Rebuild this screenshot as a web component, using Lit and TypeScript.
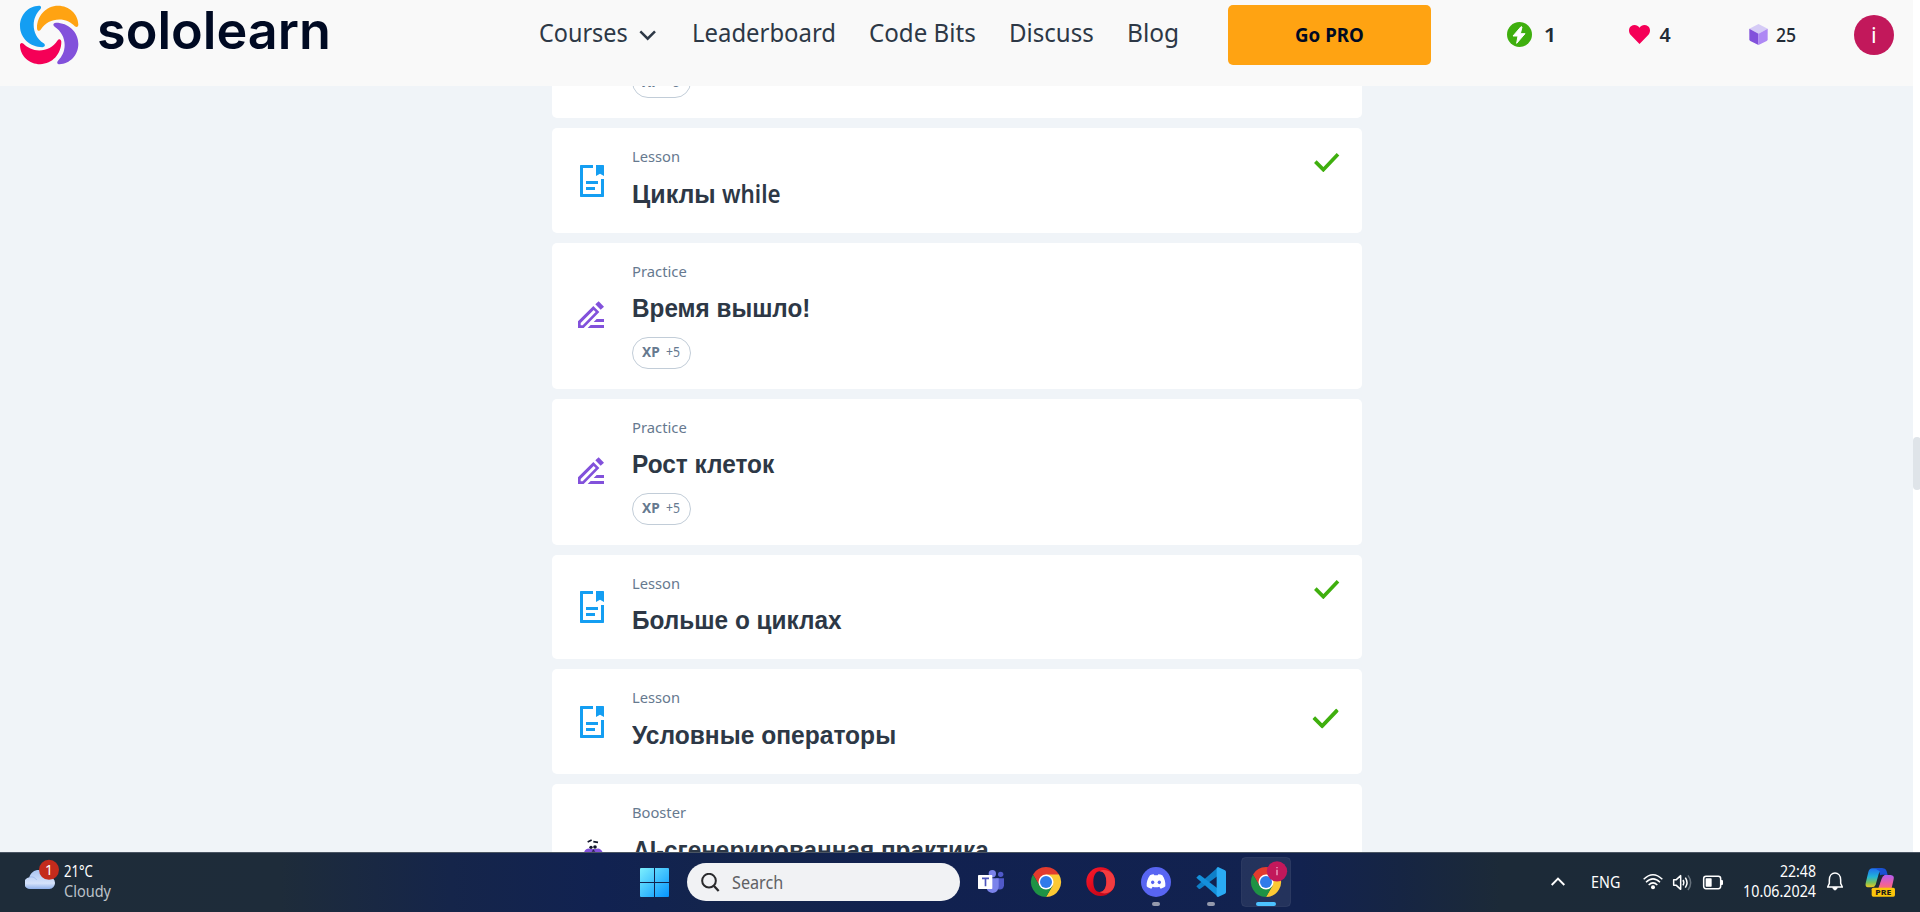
import { LitElement, html, svg, css, nothing } from "lit";
import { customElement, property, query } from "lit/decorators.js";

/* Single line of text whose inked width is set exactly in pixels. */
@customElement("fit-text")
class FitText extends LitElement {
  @property({ type: Number }) w = 10;
  @property() text = "";
  @query("span") span!: HTMLSpanElement;

  static styles = css`
    :host { display: block; flex: none; white-space: nowrap; }
    span { display: inline-block; transform-origin: 0 50%; white-space: pre; }
  `;

  updated() {
    const cs = getComputedStyle(this);
    const ctx = document.createElement("canvas").getContext("2d")!;
    ctx.font = `${cs.fontWeight} ${cs.fontSize} ${cs.fontFamily}`;
    const m = ctx.measureText(this.text);
    const ink = m.actualBoundingBoxRight + m.actualBoundingBoxLeft;
    const k = this.w / ink;
    this.style.width = `${this.w}px`;
    this.span.style.transform = `translateX(${m.actualBoundingBoxLeft * k}px) scaleX(${k})`;
  }

  render() {
    return html`<span>${this.text}</span>`;
  }
}

const t = (text: string, w: number, cls = "") =>
  html`<fit-text class=${cls} .text=${text} .w=${w}></fit-text>`;

/* Icons are drawn on a grid three times finer than the pixel grid. */
const icon = (x: number, y: number, w: number, h: number, body: unknown, cls = "") =>
  html`<svg class=${cls} width=${w / 3} height=${h / 3} viewBox="${x} ${y} ${w} ${h}">${body}</svg>`;

const petal =
  "M117 17.5C85 18 60 45 60 78C60 115 91 141.500 127 141.500C136 141 137 134 131 130C112 118 101 97 101 75C101 56 109 40 121 28C126 22 122 17.500 117 17.500Z";

const logo = icon(57, 15, 180, 180, svg`
  <path d=${petal} fill="#149ef2"/>
  <path d=${petal} fill="#ffa312" transform="rotate(90 147.500 105)"/>
  <path d=${petal} fill="#8251db" transform="rotate(180 147.500 105)"/>
  <path d=${petal} fill="#f50057" transform="rotate(270 147.500 105)"/>`, "swirl");

const docIcon = icon(114, 135, 84, 96, svg`
  <g fill="#149ef2"><path d="M159 135H122Q120 135 120 137V229Q120 231 122 231H190Q192 231 192 229V177H183V222H129V144H159Z"/>
  <path d="M168 135H190Q192 135 192 137V168L180 161L168 168Z"/>
  <path d="M138 183H174V192H138ZM138 201H165V210H138Z"/></g>`);

const penIcon = icon(114, 543, 84, 81, svg`
  <g fill="#8251db"><path d="M176 544L192 560L182 569L166 553Z"/>
  <path fill-rule="evenodd" d="M114 624V604L160 558L178 576L131 624ZM122 616H128L167 576L161 570L122 609Z"/>
  <path d="M170 597H192V606H161ZM152 615H192V624H143Z"/></g>`);

const robotIcon = icon(122, 898, 74, 72, svg`
  <path d="M142 907L154 901M159 906L173 908" stroke="#12162c" stroke-width="5" fill="none"/>
  <path d="M131 938C136 925 146 925 151 928H167C174 924 183 927 187 938L190 966H127Z" fill="#8251db"/>
  <circle cx="152" cy="923" r="5" fill="#12162c"/><circle cx="164" cy="922" r="5.500" fill="#12162c"/>
  <path d="M154 936L159 929L165 936Z" fill="#2b2250"/>`);

const tick = (cls: string) => icon(282, 98, 76, 58, svg`
  <path d="M286 124L310 148L354 102" fill="none" stroke="#3faf0e" stroke-width="11"/>`, cls);

const chrome = (cx: number) => svg`
  <g transform="translate(${cx} 126)">
    <path d="M0 0L-39 -22.500A45 45 0 0 1 39 -22.500Z" fill="#e33b2e"/>
    <path d="M0 -22.500H39A45 45 0 0 1 0 45L19.500 11Z" fill="#fcc934"/>
    <path d="M-39 -22.500L-19.500 11L0 -22.500Z" fill="#e33b2e"/>
    <path d="M-39 -22.500A45 45 0 0 0 0 45L19.500 11L0 22L-19.500 11Z" fill="#1e9345"/>
    <circle r="22.500" fill="#fff"/><circle r="18" fill="#2f7bea"/>
  </g>`;

const app = (x: number, body: unknown) => icon(x - 75, 51, 150, 150, body, "app");

const teams = app(123, svg`
  <circle cx="127" cy="101" r="11" fill="#7b83eb"/><circle cx="152" cy="103" r="8" fill="#5059c9"/>
  <path d="M138 115H162V136C162 152 140 152 138 140Z" fill="#5059c9"/>
  <path d="M107 115H146V138C146 165 112 165 109 142Z" fill="#7b83eb"/>
  <rect x="84" y="105" width="43" height="42" rx="2" fill="#fff"/>
  <path d="M96 115H117M106.500 115V139" stroke="#4b53bc" stroke-width="5" fill="none"/>`);

const opera = app(453, svg`
  <defs><linearGradient id="op" x1="0" y1="0" x2="1" y2="1"><stop offset="0" stop-color="#ff1b2d"/><stop offset=".5" stop-color="#d8091c"/><stop offset="1" stop-color="#b0061a"/></linearGradient></defs>
  <path fill="url(#op)" fill-rule="evenodd" d="M452 82A43 43 0 1 0 452 168A43 43 0 1 0 452 82ZM449 94C462 94 469 108 469 125S462 156 449 156S430 142 430 125S437 94 449 94Z"/>
  <path fill="#f23c40" d="M449 94C460 84 495 90 495 125S462 166 449 156C462 156 469 142 469 125S462 94 449 94Z"/>`);

const discord = app(618, svg`
  <circle cx="618" cy="126" r="45" fill="#5865f2"/>
  <path fill="#fff" d="M600 106C604 104 608 103 611 103L613 106H623L625 103C629 103 633 104 637 106C644 116 647 127 646 139C641 143 637 145 632 146L628 140C622 142 614 142 608 140L604 146C599 145 594 143 590 139C589 127 593 115 600 106Z"/>
  <ellipse cx="608" cy="127" rx="5" ry="5.500" fill="#5865f2"/><ellipse cx="628" cy="127" rx="5" ry="5.500" fill="#5865f2"/>
  <rect x="606" y="186" width="24" height="12" rx="6" fill="#9499ac"/>`);

const vscode = app(783, svg`
  <path d="M804 82L739 139L746 146Q749 148 753 145L812 101Z" fill="#0e7fc8"/>
  <path d="M739 113L746 106Q749 104 753 107L812 152L804 170Z" fill="#1490db"/>
  <path d="M804 81L825 91Q828 93 828 96V156Q828 159 825 161L804 171Q798 170 800 165V88Q798 83 804 81Z" fill="#2aabf4"/>
  <rect x="771" y="186" width="24" height="12" rx="6" fill="#9499ac"/>`);

const activeChrome = app(948, svg`
  <rect x="874.500" y="52.500" width="147" height="147" rx="12" fill="#fff" fill-opacity=".08" stroke="#fff" stroke-opacity=".07" stroke-width="3"/>
  ${chrome(948)}
  <circle cx="981" cy="94" r="30.500" fill="#c2185b"/>
  <path d="M981 89V106M981 81V85" stroke="#eea9c6" stroke-width="4"/>
  <rect x="918" y="186" width="60" height="12" rx="6" fill="#4cc2ff"/>`);

interface Item { kind: string; title: [string, number, string][]; size: string; icon: unknown; xp?: boolean; done?: string }

const ITEMS: Item[] = [
  { kind: "Lesson", title: [["Циклы", 81, ""], ["while", 58, "latin gap"]], size: "a", icon: docIcon, done: "high" },
  { kind: "Practice", title: [["Время вышло!", 176, ""]], size: "p", icon: penIcon, xp: true },
  { kind: "Practice", title: [["Рост клеток", 141.5, ""]], size: "p", icon: penIcon, xp: true },
  { kind: "Lesson", title: [["Больше о циклах", 208.5, ""]], size: "b", icon: docIcon, done: "high" },
  { kind: "Lesson", title: [["Условные операторы", 262.5, "wide"]], size: "a", icon: docIcon, done: "low" },
  { kind: "Booster", title: [["AI-", 30.5, ""], ["сгенерированная практика", 325.5, "tight"]], size: "r", icon: robotIcon },
];
const KIND_W: Record<string, number> = { Lesson: 46, Practice: 53.5, Booster: 53 };

@customElement("app-root")
class AppRoot extends LitElement {
  static styles = css`
    :host { display: grid; grid-template-rows: 852px 60px; width: 1920px; height: 912px; overflow: hidden; background: #fff;
      font-family: "Noto Sans", sans-serif; color: #2d3846; }
    * { box-sizing: border-box; }
    svg { display: block; flex: none; }
    .view { display: grid; grid-template-columns: 1913px 7px; min-height: 0; overflow: hidden; }
    .page { display: flex; flex-direction: column; background: #f0f4f8; min-height: 0; overflow: hidden; }
    .track { padding-top: 437px; }
    .thumb { width: 8px; height: 53px; border-radius: 4px; background: #dfe4e9; }

    header { display: flex; align-items: flex-start; height: 86px; flex: none; background: #f9f9f9; padding-left: 19px; }
    .swirl { margin-top: 5px; }
    .word { margin-left: 20px; font: 600 52px/62px "Inter", sans-serif; color: #000a23; }
    nav { display: flex; margin-left: 212px; gap: 36px; font-size: 24.500px; line-height: 65px; width: 687.500px; }
    .courses { display: flex; gap: 12px; margin-right: 1px; }
    .courses svg { margin-top: 30px; }
    .pro { display: flex; justify-content: center; width: 203px; height: 60px; margin-top: 5px; padding: 0; border: 0; border-radius: 5px; background: #ffa312;
      color: #000a23; font: 700 20px/60px "Noto Sans", sans-serif; }
    .stats { display: flex; font-size: 19.600px; font-weight: 600; line-height: 70px; color: #222b36; margin-left: 76px; }
    .stat { display: flex; }
    .bolt { width: 122px; gap: 13px; } .bolt svg { margin-top: 22px; }
    .heart { width: 120px; gap: 10px; } .heart svg { margin-top: 25px; }
    .bits { width: 105px; gap: 8px; font-weight: 500; } .bits svg { margin-top: 24px; }
    .avatar { display: flex; justify-content: center; width: 40px; height: 40px; margin-top: 15px; border-radius: 50%; background: #c2185b;
      color: #fff; font: 400 22px/39px "Noto Sans", sans-serif; }

    .list { display: flex; flex-direction: column; gap: 10px; width: 810px; margin-left: 552px; }
    .card { display: flex; align-items: flex-start; flex: none; background: #fff; border-radius: 5px; padding-left: 26px; }
    .stub { height: 32px; border-radius: 0 0 5px 5px; padding-left: 80px; overflow: hidden; align-items: flex-end; padding-bottom: 20px; }
    .stub .chip { line-height: 29px; }
    .a { height: 105px; } .b { height: 104px; } .p { height: 146px; } .r { height: 140px; }
    .ico { width: 54px; flex: none; padding-top: 37px; }
    .b .ico { padding-top: 36px; } .p .ico { padding-top: 58px; } .r .ico { padding: 55px 0 0 3px; }
    .text { flex: 1; padding-top: 18px; }
    .kind { padding-left: .5px; font-size: 14.600px; line-height: 21.600px; height: 21px; color: #66798f; }
    .title { display: flex; align-items: baseline; padding-left: .5px; height: 55px; font: 700 25.400px/54.600px "Liberation Sans", sans-serif; }
    .b .title, .p .title { line-height: 52.800px; }
    .latin { font: 650 25px/1 "Noto Sans", sans-serif; }
    .gap { margin-left: 8px; } .tight { margin-left: 1px; } .wide { margin-left: -.5px; }
    .chip { display: flex; gap: 5.500px; flex: none; width: 59px; height: 32px; border: 1px solid #c2cdd8; border-radius: 16px; padding-left: 9px;
      font-size: 14px; line-height: 27.600px; color: #66798f; }
    .xp { font-weight: 700; }
    .high { margin: 25px 22.500px 0 0; }
    .low { margin: 40px 24px 0 0; transform: scale(1.05); }

    footer { display: grid; grid-template-columns: 640px 326px 575px 1fr; border-top: 1px solid #4a5563; color: #fff;
      background: linear-gradient(90deg, #1e2c39 0, #1e2c3a 280px, #15254a 450px, #112251 600px, #14254b 760px, #112150 900px, #12224f 1300px, #162543 1400px, #1c2a38 1500px, #1c2a37 100%); }
    .weather { display: flex; padding-left: 25px; }
    .weather svg { margin-top: 6px; }
    .temps { margin-left: 4px; padding-top: 8px; font-size: 15.600px; line-height: 20px; }
    .dim { color: #bcc2c8; }
    .start { display: flex; align-items: flex-start; gap: 18px; }
    .start > svg { margin-top: 15px; }
    .search { display: flex; width: 273px; height: 38px; margin-top: 10px; border-radius: 19px; background: #f1f2f4; padding-left: 14px; gap: 12px;
      font-size: 17.500px; line-height: 38.600px; color: #606164; }
    .search svg { margin-top: 10px; }
    .apps { display: flex; gap: 5px; padding-top: 4px; }
    .tray { display: flex; padding-left: 10px; font-size: 15.600px; }
    .tray > svg { margin-top: 20px; }
    .lang { margin: 0 23px 0 27px; line-height: 59.800px; }
    .clock { display: flex; flex-direction: column; align-items: flex-end; width: 92px; padding-top: 8px; line-height: 20px; }
    .tray > .bell { margin: 19px 0 0 11px; }
    .tray > .copilot { margin: 15px 0 0 22px; }
  `;

  chip() {
    return html`<div class="chip">${t("XP", 18, "xp")}${t("+5", 14)}</div>`;
  }

  card(i: Item) {
    return html`<article class="card ${i.size}">
      <div class="ico">${i.icon}</div>
      <div class="text">
        <div class="kind">${t(i.kind, KIND_W[i.kind])}</div>
        <div class="title">${i.title.map(([s, w, c]) => t(s, w, c))}</div>
        ${i.xp ? this.chip() : nothing}
      </div>
      ${i.done ? tick(i.done) : nothing}
    </article>`;
  }

  render() {
    return html`
      <div class="view">
        <div class="page">
          <header>
            ${logo}${t("sololearn", 229, "word")}
            <nav>
              <div class="courses">${t("Courses", 87)}
                ${icon(358, 90, 54, 33, svg`<path d="M362 94L384 116L406 94" fill="none" stroke="#2d3846" stroke-width="7.500"/>`)}</div>
              ${t("Leaderboard", 140)}${t("Code Bits", 105)}${t("Discuss", 82)}${t("Blog", 48)}
            </nav>
            <button class="pro">${t("Go PRO", 67)}</button>
            <div class="stats">
              <div class="stat bolt">${icon(198, 66, 75, 75, svg`<circle cx="235.500" cy="103.500" r="37.500" fill="#3faf0e"/>
                <path d="M240 80L216 108H231L227 130L252 101H238L243 81Z" fill="#fff" stroke="#fff" stroke-width="3" stroke-linejoin="round"/>`)}${t("1", 8)}</div>
              <div class="stat heart">${icon(565, 75, 63, 57, svg`<path d="M596.500 132L571 106C563 97 563 85 571 79C579 73 590 74 596.500 83C603 74 614 73 622 79C630 85 630 97 622 106Z" fill="#f50057"/>`)}${t("4", 11)}</div>
              <div class="stat bits">${icon(924, 72, 57, 63, svg`<path d="M952.500 72L980 86L952.500 101L925 86Z" fill="#d5cbf6"/>
                <path d="M925 86L952.500 101V135L928 123Q925 121 925 118Z" fill="#8251db"/><path d="M980 86L952.500 101V135L977 123Q980 121 980 118Z" fill="#ae88f4"/>`)}${t("25", 20)}</div>
              <div class="avatar">${t("i", 3)}</div>
            </div>
          </header>
          <main class="list">
            <article class="card stub">${this.chip()}</article>
            ${ITEMS.map((i) => this.card(i))}
          </main>
        </div>
        <div class="track"><div class="thumb"></div></div>
      </div>
      <footer>
        <div class="weather">
          ${icon(75, 57, 105, 96, svg`
            <defs><linearGradient id="cl" x1="0" y1="0" x2="0" y2="1"><stop offset="0" stop-color="#a9c4f2"/><stop offset=".7" stop-color="#d5e2fa"/><stop offset="1" stop-color="#8fb0ea"/></linearGradient></defs>
            <path d="M92 147A17 17 0 0 1 88 112C92 96 106 88 120 90C136 92 144 102 146 111A18 18 0 0 1 148 147Z" fill="url(#cl)"/>
            <path d="M88 112C98 108 106 114 110 120" stroke="#8eaee8" stroke-width="2" fill="none"/>
            <circle cx="147" cy="89.500" r="30" fill="#c42b1c"/>
            <text x="147" y="105" text-anchor="middle" font-size="42" font-family="Noto Sans, sans-serif" fill="#fff">1</text>`)}
          <div class="temps">${t("21°C", 29)}${t("Cloudy", 47, "dim")}</div>
        </div>
        <div class="start">
          ${icon(60, 84, 87, 87, svg`
            <defs><linearGradient id="wn" gradientUnits="userSpaceOnUse" x1="60" y1="84" x2="147" y2="171"><stop offset="0" stop-color="#7ceffd"/><stop offset="1" stop-color="#0594ff"/></linearGradient></defs>
            <path fill="url(#wn)" d="M62 84H102V126H60V86ZM105 84H145L147 86V126H105ZM60 129H102V171H62L60 169ZM105 129H147V169L145 171H105Z"/>`)}
          <div class="search">${icon(242, 98, 57, 57, svg`<circle cx="266" cy="121" r="20.500" fill="none" stroke="#2a2a2c" stroke-width="6"/><path d="M281 137L295 152" stroke="#2a2a2c" stroke-width="7"/>`)}${t("Search", 50.5)}</div>
        </div>
        <div class="apps">${teams}${app(288, chrome(288))}${opera}${discord}${vscode}${activeChrome}</div>
        <div class="tray">
          ${icon(93, 100, 42, 52, svg`<path d="M95 136L114 117L133 136" fill="none" stroke="#fff" stroke-width="6"/>`)}
          ${t("ENG", 28, "lang")}
          ${icon(369, 98, 60, 54, svg`<g fill="none" stroke="#fff" stroke-width="4.500"><path d="M371 117Q399 90 427 117"/><path d="M378 126Q399 105 420 126"/><path d="M386 134Q399 121 412 134"/></g><circle cx="399" cy="141" r="6" fill="#fff"/>`)}
          ${icon(429, 98, 90, 54, svg`<g fill="none" stroke="#fff" stroke-width="4.500" stroke-linejoin="round"><path d="M461 118H469L482 106V147L469 135H461Z"/><path d="M489 119Q494 127 489 135M496 112Q506 127 496 142"/><path d="M504 105Q520 127 504 149" stroke="#66717c"/></g>`)}
          ${icon(519, 98, 93, 54, svg`<rect x="551" y="108" width="51" height="37" rx="7" fill="none" stroke="#fff" stroke-width="4.500"/><rect x="557" y="114" width="18" height="25" rx="2" fill="#fff"/><path d="M603 119H606Q609 119 609 122V131Q609 134 606 134H603Z" fill="#fff"/>`)}
          <div class="clock">${t("22:48", 36)}${t("10.06.2024", 72)}</div>
          ${icon(921, 97, 48, 60, svg`<path d="M928 121C928 93 962 93 962 121V131L967 142H923L928 131Z" fill="none" stroke="#fff" stroke-width="4.500" stroke-linejoin="round"/><path d="M938 144Q945 158 952 144Z" fill="#fff" stroke="#fff" stroke-width="3"/>`, "bell")}
          ${icon(1036, 86, 92, 86, svg`
            <defs><linearGradient id="c1" x1="0" y1="0" x2="0" y2="1"><stop offset="0" stop-color="#1e6df0"/><stop offset=".45" stop-color="#22b4d8"/><stop offset=".75" stop-color="#79c25a"/><stop offset="1" stop-color="#f2c81e"/></linearGradient>
            <linearGradient id="c2" x1="0" y1="0" x2="0" y2="1"><stop offset="0" stop-color="#b45cf0"/><stop offset=".5" stop-color="#f0609c"/><stop offset="1" stop-color="#fb8a3c"/></linearGradient></defs>
            <path d="M1058 87H1090Q1080 92 1077 104L1068 136Q1065 144 1056 144H1044Q1036 143 1038 132L1046 98Q1049 87 1058 87Z" fill="url(#c1)"/>
            <path d="M1066 87H1090Q1098 87 1101 96L1104 107H1093Q1085 107 1082 116L1080 96Z" fill="#1a50d4"/>
            <path d="M1093 107H1113Q1125 108 1122 120L1116 146Q1113 158 1103 162H1068Q1074 156 1076 148L1084 116Q1086 108 1093 107Z" fill="url(#c2)"/>
            <path d="M1087 106H1096Q1088 110 1086 118L1078 140H1069L1078 112Q1080 106 1087 106Z" fill="#1c2a38"/>
            <rect x="1056" y="145" width="70" height="27" rx="5" fill="#fcc50b"/>
            <text x="1091" y="166" text-anchor="middle" textLength="48" lengthAdjust="spacingAndGlyphs" font-size="22" font-weight="800" font-family="Noto Sans, sans-serif" fill="#1a1a1a">PRE</text>`, "copilot")}
        </div>
      </footer>`;
  }
}
